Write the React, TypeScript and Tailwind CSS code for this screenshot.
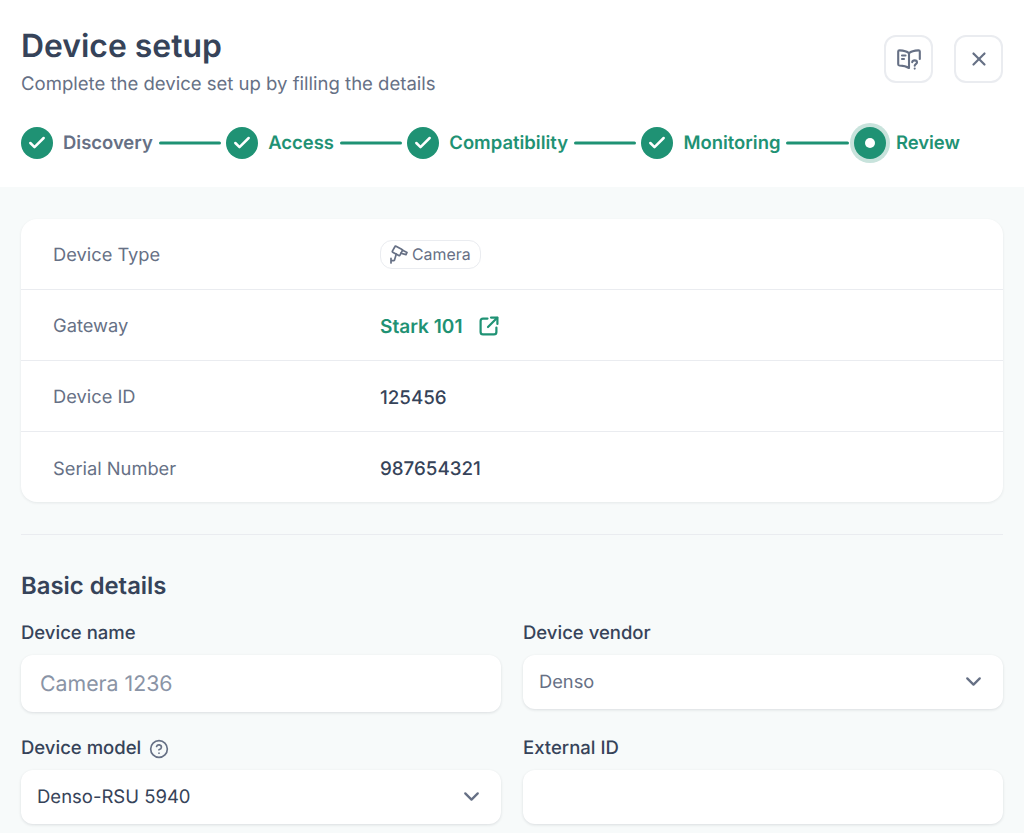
import { Check, ChevronDown, CircleHelp, X } from "lucide-react";

function BookHelp() {
  return (
    <svg width="24" height="24" viewBox="0 0 24 24" fill="none" stroke="#667085" strokeWidth="2.1" strokeLinecap="round" strokeLinejoin="round">
      <path d="M12 6.2C10.2 4.6 6.5 3.6 2.5 3.4C1.7 3.4 1.2 3.9 1.2 4.6V17.2C1.2 17.9 1.7 18.4 2.4 18.5C6.4 18.7 9.8 19.6 12 21V6.2Z" />
      <path d="M12 6.2C13.8 4.6 17.5 3.6 21.5 3.4C22.3 3.4 22.8 3.9 22.8 4.6V12" />
      <path d="M5 8.5H8.5M5 12H7" />
      <path d="M15.2 15.2C15.4 14 16.4 13.4 17.6 13.4C18.9 13.4 20 14.2 20 15.5C20 17.2 17.7 17.2 17.7 18.8" />
      <path d="M17.7 21.6H17.72" />
    </svg>
  );
}

function CameraIcon() {
  return (
    <svg width="18" height="19" viewBox="0 0 18 19" fill="none" stroke="#667085" strokeWidth="1.7" strokeLinecap="round" strokeLinejoin="round">
      <path d="M5 1.5L2.4 6.2C2.2 6.6 2.3 7 2.7 7.2L8.8 10.6C9.2 10.8 9.6 10.7 9.8 10.3L12.4 5.6C12.6 5.2 12.5 4.8 12.1 4.6L6 1.2C5.6 1 5.2 1.1 5 1.5Z" />
      <path d="M12.2 5L17 7.4L16 9.6L10.8 8.2" />
      <path d="M1 18V13.4M1 15.7H3.6C4 15.7 4.3 15.5 4.5 15.1L6.3 9" />
    </svg>
  );
}

function ExternalIcon() {
  return (
    <svg width="20" height="20" viewBox="0 0 20 20" fill="none" stroke="#1f9274" strokeWidth="2.2" strokeLinecap="round" strokeLinejoin="round" className="mb-[2px] ml-[16px]">
      <path d="M8.5 2.6H4C2.6 2.6 1.6 3.6 1.6 5V16C1.6 17.4 2.6 18.4 4 18.4H15C16.4 18.4 17.4 17.4 17.4 16V11.5" />
      <path d="M12 1.6H18.4V8" />
      <path d="M18.2 1.8L9 11" />
    </svg>
  );
}

function Step({ label, muted }: { label: string; muted?: boolean }) {
  return (
    <>
      <span className="flex h-8 w-8 shrink-0 items-center justify-center rounded-full bg-[#1f9274]">
        <Check size={20} strokeWidth={3} className="text-white" />
      </span>
      <span className={`ml-[10px] mr-[6px] text-[18.45px] font-semibold leading-7 ${muted ? "text-[#667085]" : "text-[#1f9274]"}`}>{label}</span>
      <span className="mr-[5px] h-[3px] flex-1 -translate-y-[0.5px] rounded-full bg-[#1f9274]" />
    </>
  );
}

function Row({ label, children, last }: { label: string; children: React.ReactNode; last?: boolean }) {
  return (
    <div className={`flex items-center pl-8 ${last ? "h-[70px] pt-[5px]" : "h-[71px] border-b border-[#eaecf0] pt-[3.5px]"}`}>
      <div className="w-[327px] text-[18.3px] text-[#667085]">{label}</div>
      <div className="flex items-center">{children}</div>
    </div>
  );
}

function Field({ label, help, value, placeholder, select, tall, left }: { label: string; help?: boolean; value?: string; placeholder?: boolean; select?: boolean; tall?: boolean; left?: string }) {
  return (
    <div className="flex flex-col">
      <div className="flex h-[28px] items-center gap-[8px] text-[18.5px] font-medium text-[#364359]">
        {label}
        {help && <CircleHelp size={20} strokeWidth={2} className="text-[#667085]" />}
      </div>
      <div className={`mt-[7px] flex items-center justify-between rounded-xl bg-white pr-[17px] shadow-[0_1px_3px_rgba(16,24,40,0.12)] ${tall ? "h-[57px]" : "h-[54px]"} ${left}`}>
        <span className={`${tall ? "pt-[3px] text-[21.3px]" : value === "Denso" ? "pt-[2px] text-[18.3px]" : "pt-[3px] text-[18.5px]"} ${placeholder ? "text-[#8a94a6]" : value === "Denso" ? "text-[#667085]" : "text-[#364359]"}`}>{value}</span>
        {select && <ChevronDown size={25} strokeWidth={2.2} className="text-[#667085]" />}
      </div>
    </div>
  );
}

export default function App() {
  return (
    <div className="h-[833px] w-[1024px] overflow-hidden bg-[#f7fafa] font-['Inter',sans-serif] [text-rendering:geometricPrecision]">
      <header className="h-[187px] bg-white px-[21px] pt-[26px]">
        <div className="flex items-start justify-between">
          <div>
            <h1 className="text-[31.9px] font-semibold leading-10 text-[#364359]">Device setup</h1>
            <p className="mt-[4px] text-[18.54px] leading-7 text-[#667085]">Complete the device set up by filling the details</p>
          </div>
          <div className="mt-[9px] flex gap-[21px]">
            <button className="flex h-12 w-[49px] items-center justify-center rounded-xl border-2 border-[#eaecf0] bg-white"><BookHelp /></button>
            <button className="flex h-12 w-[49px] items-center justify-center rounded-xl border-2 border-[#eaecf0] bg-white"><X size={22} strokeWidth={2.4} className="text-[#667085]" /></button>
          </div>
        </div>
        <div className="mt-[29px] flex items-center">
          <Step label="Discovery" muted />
          <Step label="Access" />
          <Step label="Compatibility" />
          <Step label="Monitoring" />
          <span className="flex h-8 w-8 shrink-0 items-center justify-center rounded-full bg-[#1f9274] shadow-[0_0_0_4px_#c8e3dc]">
            <span className="h-[10px] w-[10px] rounded-full bg-white" />
          </span>
          <span className="ml-[10px] mr-[43px] text-[18.45px] font-semibold leading-7 text-[#1f9274]">Review</span>
        </div>
      </header>
      <main className="px-[21px] pt-8">
        <section className="rounded-2xl bg-white shadow-[0_1px_3px_rgba(16,24,40,0.08)]">
          <Row label="Device Type">
            <span className="mb-[2px] flex h-[29px] items-center gap-[4px] rounded-xl border border-[#eaecf0] pl-[9px] pr-[9px] text-[15.9px] text-[#667085]"><CameraIcon />Camera</span>
          </Row>
          <Row label="Gateway">
            <span className="text-[19.1px] font-semibold text-[#1f9274]">Stark 101</span>
            <ExternalIcon />
          </Row>
          <Row label="Device ID"><span className="text-[18.75px] font-medium text-[#364359]">125456</span></Row>
          <Row label="Serial Number" last><span className="text-[18.75px] font-medium text-[#364359]">987654321</span></Row>
        </section>
        <hr className="mt-8 border-[#eaecf0]" />
        <h2 className="mt-[35px] text-[23.85px] font-semibold leading-8 text-[#364359]">Basic details</h2>
        <div className="mt-[17.5px] grid grid-cols-[480px_480px] gap-x-[22px] gap-y-[23px]">
          <Field label="Device name" value="Camera 1236" placeholder tall left="pl-[19px]" />
          <Field label="Device vendor" value="Denso" select left="pl-4" />
          <Field label="Device model" help value="Denso-RSU 5940" select left="pl-4" />
          <Field label="External ID" value="" left="pl-4" />
        </div>
      </main>
    </div>
  );
}
